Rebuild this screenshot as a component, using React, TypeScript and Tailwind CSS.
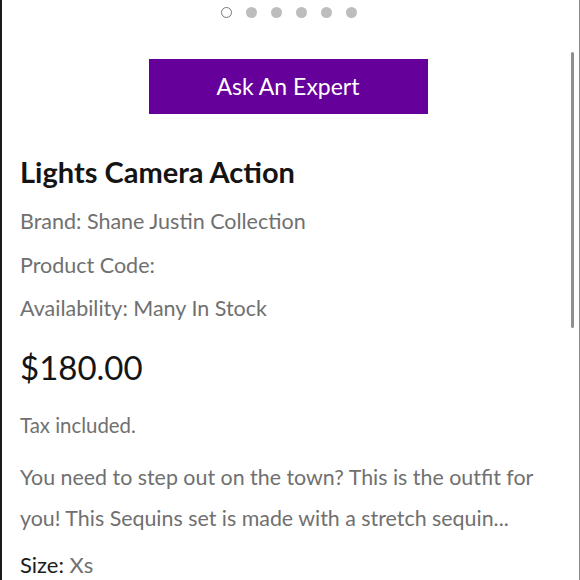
export default function App() {
  const dots = [0, 1, 2, 3, 4, 5];

  return (
    <div
      className="relative h-[580px] w-[580px] overflow-hidden border-l-2 border-r border-l-[#1a1a1a] border-r-[#8c8c8c] bg-white"
      style={{ fontFamily: "Lato, 'Liberation Sans', sans-serif" }}
    >
      {/* slider dots */}
      <div className="flex justify-center gap-[14px] pt-[7px] pr-[4px]">
        {dots.map((d) =>
          d === 0 ? (
            <span key={d} className="h-[11px] w-[11px] rounded-full border-[1.5px] border-[#777]" />
          ) : (
            <span key={d} className="h-[11px] w-[11px] rounded-full bg-[#bdbdbd]" />
          )
        )}
      </div>

      <div className="mt-[41px] flex justify-center pr-[5px]">
        <button className="h-[55px] w-[279px] bg-[#65009b] text-[23px] text-white">
          Ask An Expert
        </button>
      </div>

      <div className="pl-[18px] pr-[30px]">
        <h1 className="mt-[41px] text-[29px] font-bold leading-[34px] text-[#141414]">
          Lights Camera Action
        </h1>

        <div className="mt-[11px] flex flex-col text-[21.5px] leading-[43.5px] text-[#707070]">
          <p>Brand: Shane Justin Collection</p>
          <p>Product Code:</p>
          <p>Availability: Many In Stock</p>
        </div>

        <p className="mt-[16px] text-[33px] leading-[40px] text-[#141414]">$180.00</p>

        <p className="mt-[26px] text-[20.4px] leading-[24px] text-[#707070]">Tax included.</p>

        <p className="mt-[20px] text-[21.4px] leading-[41px] text-[#707070]">
          You need to step out on the town? This is the outfit for you! This Sequins set is made with a stretch sequin...
        </p>

        <p className="mt-[13px] text-[22px] leading-[26px] text-[#1c1c1c]">
          Size: <span className="text-[#707070]">Xs</span>
        </p>
      </div>

      {/* scrollbar thumb */}
      <div className="absolute right-[5px] top-[52px] h-[276px] w-[3px] rounded-full bg-[#8f8f8f]" />
    </div>
  );
}
